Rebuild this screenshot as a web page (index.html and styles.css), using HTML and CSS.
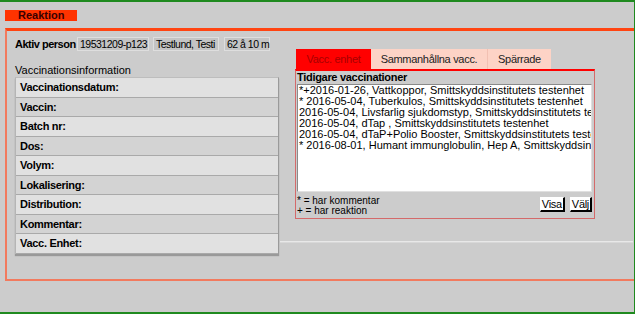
FILE: index.html
```html
<!DOCTYPE html>
<html lang="sv">

<head>
  <meta charset="UTF-8" />
  <meta name="viewport" content="width=device-width, initial-scale=1.0" />
  <title>Reaktion</title>
  <link rel="stylesheet" href="styles.css">
</head>

<body>
  <div class="page">
    <div class="title">Reaktion</div>
    <div class="main">
      <div class="left">
        <div class="person">
          <b class="person-label">Aktiv person</b>
          <span class="val pnr">19531209-p123</span>
          <span class="val name">Testlund, Testi</span>
          <span class="val age">62 å 10 m</span>
        </div>
        <div class="section">Vaccinationsinformation</div>
        <div class="info">
          <div class="row">Vaccinationsdatum:</div>
          <div class="row">Vaccin:</div>
          <div class="row">Batch nr:</div>
          <div class="row">Dos:</div>
          <div class="row">Volym:</div>
          <div class="row">Lokalisering:</div>
          <div class="row">Distribution:</div>
          <div class="row">Kommentar:</div>
          <div class="row">Vacc. Enhet:</div>
        </div>
      </div>
      <div class="right">
        <div class="tabs">
          <a class="tab tab-unit active" href="javascript:;">Vacc. enhet</a>
          <a class="tab tab-all" href="javascript:;">Sammanhållna vacc.</a>
          <a class="tab tab-blocked" href="javascript:;">Spärrade</a>
        </div>
        <div class="panel">
          <div class="panel-title">Tidigare vaccinationer</div>
          <div class="list">
            <div>*+2016-01-26, Vattkoppor, Smittskyddsinstitutets testenhet</div>
            <div>* 2016-05-04, Tuberkulos, Smittskyddsinstitutets testenhet</div>
            <div>2016-05-04, Livsfarlig sjukdomstyp, Smittskyddsinstitutets testenhet</div>
            <div>2016-05-04, dTap , Smittskyddsinstitutets testenhet</div>
            <div>2016-05-04, dTaP+Polio Booster, Smittskyddsinstitutets testenhet</div>
            <div>* 2016-08-01, Humant immunglobulin, Hep A, Smittskyddsinstitutets testenhet</div>
          </div>
          <div class="panel-foot">
            <div class="legend">
              <div class="legend-line">* = har kommentar</div>
              <div class="legend-line">+ = har reaktion</div>
            </div>
            <button class="btn">Visa</button>
            <button class="btn">Välj</button>
          </div>
        </div>
        <div class="rule"></div>
      </div>
    </div>
  </div>
</body>

</html>
```

FILE: styles.css
```css
* {
  padding: 0;
  margin: 0;
  box-sizing: border-box;
}

body {
  font-family: "Liberation Sans", Arial, sans-serif;
  font-size: 11px;
  color: #000;
  background: #cccccc;
}

.page {
  height: 314px;
  border-top: 2px solid #1f8a1f;
  border-right: 1px solid #1f8a1f;
  border-bottom: 2px solid #1f8a1f;
  padding-top: 8px;
}

.title {
  margin-left: 5px;
  width: 72px;
  height: 11px;
  line-height: 11px;
  padding-left: 13px;
  background: #ff3300;
  color: #3a0000;
  font-weight: bold;
}

.main {
  display: flex;
  gap: 16px;
  margin: 7px 0 0 5px;
  height: 253px;
  padding-left: 8px;
  border-top: 3px solid #ff4411;
  border-left: 2px solid #f27a5e;
  border-bottom: 2px solid #f27a5e;
}

.left {
  flex-shrink: 0;
  width: 264px;
  padding-top: 6px;
}

.person {
  display: flex;
  align-items: center;
  height: 14px;
  white-space: nowrap;
}

.person-label {
  width: 62px;
  letter-spacing: -0.5px;
}

.val {
  flex-shrink: 0;
  height: 14px;
  line-height: 12px;
  padding: 0 1px 0 2px;
  font-size: 10.5px;
  letter-spacing: -0.5px;
  background: #c4c4c4;
  border: 1px solid #dedede;
}

.pnr {
  width: 72px;
}

.name {
  width: 66px;
  margin-left: 4px;
}

.age {
  width: 46px;
  margin-left: 5px;
}

.section {
  margin-top: 14px;
  height: 11px;
  line-height: 11px;
}

.info {
  margin-top: 1px;
  width: 264px;
  border-top: 1px solid #bdbdbd;
  border-left: 1px solid #b5b5b5;
  border-right: 1px solid #9a9a9a;
  box-shadow: 0 2px 1px rgba(0, 0, 0, 0.25);
}

.row {
  height: 19.5px;
  line-height: 18px;
  padding-left: 4px;
  font-weight: bold;
  letter-spacing: -0.3px;
  background: #e1e1e1;
  border-bottom: 1px solid #a9a9a9;
}

.row:nth-child(even) {
  background: #d3d3d3;
}

.right {
  flex-shrink: 0;
  width: 300px;
  padding-top: 18px;
}

.tabs {
  display: flex;
  height: 20px;
  margin-left: 1px;
}

.tab {
  display: block;
  height: 20px;
  line-height: 20px;
  text-align: center;
  text-decoration: none;
  color: #222;
  background: #fdd3c6;
  letter-spacing: -0.3px;
}

.tab-unit {
  width: 75px;
}

.tab-all {
  width: 116px;
}

.tab-blocked {
  width: 64px;
  border-left: 1px solid #f2c0b2;
}

.tab.active {
  background: #ff0000;
  color: #a80000;
}

.panel {
  height: 150px;
  padding: 0 2px 0 1px;
  border: 1px solid #d46a6a;
  border-top: 2px solid #ff0000;
}

.panel-title {
  height: 13px;
  line-height: 13px;
  font-weight: bold;
  letter-spacing: -0.3px;
}

.list {
  height: 108px;
  padding-left: 1px;
  line-height: 11px;
  white-space: nowrap;
  overflow: hidden;
  background: #fff;
  border: 1px solid;
  border-color: #8a8a8a #e0e0e0 #e0e0e0 #8a8a8a;
}

.panel-foot {
  display: flex;
  align-items: flex-start;
  padding-top: 4px;
}

.legend {
  flex: 1;
  font-size: 10px;
}

.legend-line {
  height: 10px;
  line-height: 10px;
}

.btn {
  height: 15px;
  margin-top: 1px;
  margin-left: 5px;
  padding: 0 1px;
  font: 11px "Liberation Sans", Arial, sans-serif;
  letter-spacing: -0.3px;
  background: #fff;
  border: 1px solid;
  border-color: #fff #000 #000 #fff;
  border-right-width: 2px;
  border-bottom-width: 2px;
}

.rule {
  margin: 22px 0 0 -15px;
  width: 353px;
  height: 2px;
  background: #e8e8e8;
  border-bottom: 1px solid #d8d8d8;
}
```
